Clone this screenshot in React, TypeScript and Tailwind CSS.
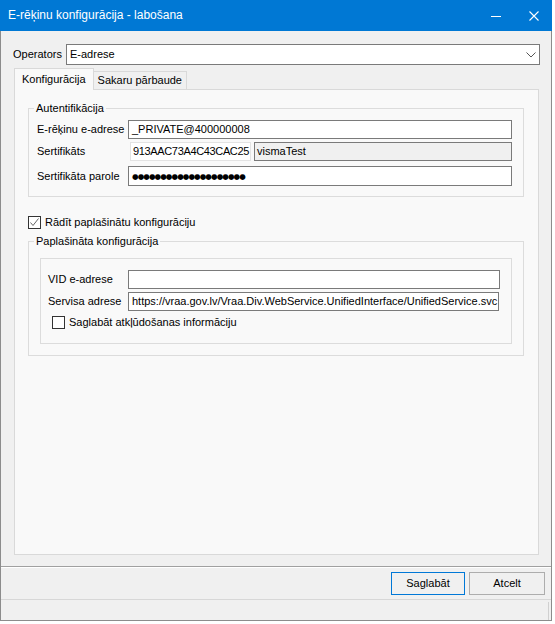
import React from 'react';

const Field = ({ value, className = '' }: { value?: string; className?: string }) => (
  <div
    className={`flex h-[19px] items-center overflow-hidden whitespace-nowrap border border-[#7a7a7a] bg-white pl-[3px] ${className}`}
  >
    {value}
  </div>
);

const Check = ({ checked }: { checked?: boolean }) => (
  <div className="flex h-[13px] w-[13px] shrink-0 items-center justify-center border border-[#333] bg-white">
    {checked && (
      <svg width="11" height="11" viewBox="0 0 11 11">
        <polyline points="1.5,5.5 4,8.5 9.5,1.5" fill="none" stroke="#666" strokeWidth="1" />
      </svg>
    )}
  </div>
);

export default function App() {
  return (
    <div className="h-[624px] w-[555px] whitespace-nowrap bg-white font-['Liberation_Sans',Arial,sans-serif] text-[11px] leading-[15px] text-black">
      <div className="flex h-[621px] w-[552px] flex-col border-x border-b border-[#8c8c8c] bg-[#f0f0f0]">
        {/* title bar */}
        <div className="-mx-px flex h-[31px] shrink-0 items-center bg-[#0078d4] pl-[8px] text-[12px] text-white">
          <span className="flex-1">E-rēķinu konfigurācija - labošana</span>
          <div className="flex h-full w-[41px] items-center justify-center">
            <svg width="10" height="10" viewBox="0 0 10 10">
              <line x1="0" y1="5.5" x2="10" y2="5.5" stroke="white" strokeWidth="1" />
            </svg>
          </div>
          <div className="flex h-full w-[36px] items-center justify-center">
            <svg width="10" height="10" viewBox="0 0 10 10">
              <path d="M0.5 0.5 L9.5 9.5 M9.5 0.5 L0.5 9.5" stroke="white" strokeWidth="1.1" />
            </svg>
          </div>
        </div>

        {/* operators */}
        <div className="mt-[13px] flex h-[21px] items-center pl-[12px]">
          <span className="w-[53px]">Operators</span>
          <div className="flex h-[21px] w-[474px] items-center border border-[#7a7a7a] bg-white pl-[3px]">
            <span className="flex-1">E-adrese</span>
            <svg className="mr-[3px]" width="10" height="6" viewBox="0 0 10 6">
              <polyline points="0.5,0.5 5,5 9.5,0.5" fill="none" stroke="#555" strokeWidth="1" />
            </svg>
          </div>
        </div>

        {/* tabs */}
        <div className="ml-[13px] mt-[3px] flex items-end">
          <div className="z-10 -mb-px flex h-[22px] items-center border border-b-0 border-[#d9d9d9] bg-[#f9f9f9] px-[7px]">
            Konfigurācija
          </div>
          <div className="-ml-px flex h-[18px] items-center border border-b-0 border-[#d9d9d9] bg-[#f0f0f0] px-[4px]">
            Sakaru pārbaude
          </div>
        </div>
        <div className="ml-[13px] flex h-[466px] w-[525px] flex-col border border-[#d9d9d9] bg-[#f9f9f9] pl-[13px]">
          <fieldset className="mt-[11px] w-[496px] border border-[#dcdcdc] pb-[10px] pl-[5px] pr-[11px]">
            <legend className="px-[2px]">Autentifikācija</legend>
            <div className="pl-[3px]">
              <div className="mt-[4px] flex items-center">
                <span className="w-[91px]">E-rēķinu e-adrese</span>
                <Field className="flex-1" value="_PRIVATE@400000008" />
              </div>
              <div className="mt-[3px] flex items-center">
                <span className="w-[91px]">Sertifikāts</span>
                <div className="ml-[2px] flex h-[19px] w-[121px] items-center overflow-hidden border border-[#e3e3e3] bg-white pl-[2px] tracking-[-0.35px]">
                  913AAC73A4C43CAC25
                </div>
                <div className="ml-[3px] flex h-[19px] flex-1 items-center border border-[#7a7a7a] bg-[#f0f0f0] pl-[2px]">
                  vismaTest
                </div>
              </div>
              <div className="mt-[5px] flex items-center">
                <span className="w-[91px]">Sertifikāta parole</span>
                <div className="flex h-[20px] flex-1 items-center border border-[#7a7a7a] bg-white pl-[3px] font-['DejaVu_Sans',sans-serif] text-[7.5px] tracking-[-0.9px]">
                  ●●●●●●●●●●●●●●●●●●●●
                </div>
              </div>
            </div>
          </fieldset>

          <div className="mt-[18px] flex items-center gap-[4px]">
            <Check checked />
            <span>Rādīt paplašinātu konfigurāciju</span>
          </div>

          <fieldset className="mt-[4px] w-[496px] border border-[#dcdcdc] pb-[11px] pl-[5px] pr-[11px]">
            <legend className="px-[2px]">Paplašināta konfigurācija</legend>
            <div className="ml-[6px] mt-[9px] flex flex-col border border-[#dcdcdc] pb-[13px] pl-[7px] pr-[11px] pt-[11px]">
              <div className="flex items-center">
                <span className="w-[80px]">VID e-adrese</span>
                <Field className="flex-1" />
              </div>
              <div className="mt-[3px] flex items-center">
                <span className="w-[80px]">Servisa adrese</span>
                <Field
                  className="w-[371px]"
                  value="https://vraa.gov.lv/Vraa.Div.WebService.UnifiedInterface/UnifiedService.svc"
                />
              </div>
              <div className="mt-[4px] flex items-center gap-[4px] pl-[4px]">
                <Check />
                <span>Saglabāt atkļūdošanas informāciju</span>
              </div>
            </div>
          </fieldset>
        </div>

        {/* footer */}
        <div className="mt-[11px] border-t border-[#a0a0a0] shadow-[inset_0_1px_0_#ffffff]">
          <div className="flex justify-end gap-[4px] pb-[4px] pr-[6px] pt-[5px]">
            <button className="h-[23px] w-[74px] border border-[#0078d7] bg-[#f0f0f0]">Saglabāt</button>
            <button className="h-[23px] w-[76px] border border-[#adadad] bg-[#f0f0f0]">Atcelt</button>
          </div>
        </div>
        <div className="flex flex-1 border-t border-[#d7d7d7]">
          <div className="flex-1" />
          <div className="mr-[2px] mt-[2px] h-[18px] border-r border-[#d0d0d0]" />
        </div>
      </div>
    </div>
  );
}
